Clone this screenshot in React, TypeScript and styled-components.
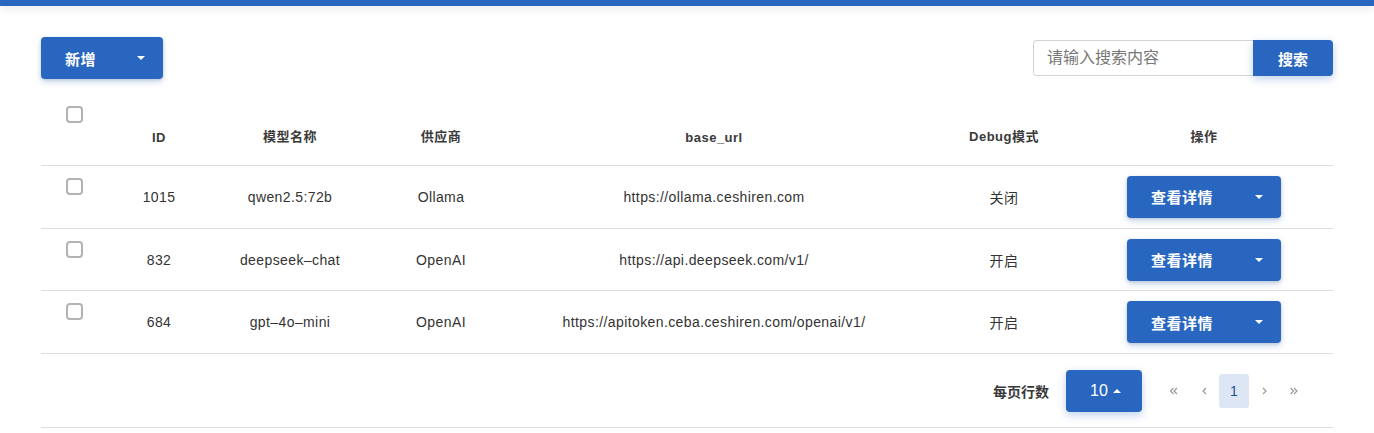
import React from "react";
import styled, { createGlobalStyle } from "styled-components";

const BLUE = "#2966c0";

const GlobalStyle = createGlobalStyle`
  html, body { margin: 0; padding: 0; background: #fff; }
  body {
    font-family: "Liberation Sans", "Noto Sans CJK SC", Arial, sans-serif;
    color: #333;
    -webkit-font-smoothing: antialiased;
  }
  * { box-sizing: border-box; }
`;

const TopBar = styled.div`
  height: 6px;
  background: ${BLUE};
  box-shadow: 0 2px 10px rgba(0, 0, 0, 0.12);
`;

const Page = styled.div`
  padding: 31px 41px 0 41px;
`;

const Toolbar = styled.div`
  display: flex;
  align-items: center;
  justify-content: space-between;
  height: 42px;
`;

const SplitButton = styled.button<{ $w: number }>`
  display: flex;
  align-items: center;
  justify-content: space-between;
  width: ${(p) => p.$w}px;
  height: 42px;
  padding: 0 18px 0 24px;
  border: none;
  border-radius: 4px;
  background: ${BLUE};
  color: #fff;
  font-family: inherit;
  font-size: 15px;
  font-weight: 700;
  letter-spacing: 0.5px;
  box-shadow: 0 3px 6px rgba(41, 102, 192, 0.25), 0 1px 3px rgba(0, 0, 0, 0.12);
  cursor: pointer;
`;

const Caret = styled.span<{ $up?: boolean }>`
  width: 0;
  height: 0;
  border-left: 4px solid transparent;
  border-right: 4px solid transparent;
  ${(p) =>
    p.$up ? "border-bottom: 4px solid #fff;" : "border-top: 4px solid #fff;"}
`;

const SearchGroup = styled.div`
  display: flex;
  align-items: stretch;
  height: 36px;
`;

const SearchInput = styled.input`
  width: 220px;
  height: 36px;
  border: 1px solid #d4d4d4;
  border-right: none;
  border-radius: 4px 0 0 4px;
  padding: 0 13px;
  font-family: inherit;
  font-size: 16px;
  color: #333;
  outline: none;
  &::placeholder { color: #777; }
`;

const SearchButton = styled.button`
  width: 80px;
  border: none;
  border-radius: 0 4px 4px 0;
  background: ${BLUE};
  color: #fff;
  font-family: inherit;
  font-size: 15px;
  font-weight: 700;
  box-shadow: 0 3px 8px rgba(41, 102, 192, 0.3);
  cursor: pointer;
`;

const Table = styled.div`
  margin-top: 13px;
  font-size: 14px;
`;

const COLS = "67px 102px 160px 142px 404px 176px 224px 17px";

const HeaderRow = styled.div`
  display: grid;
  grid-template-columns: ${COLS};
  height: 74px;
  border-bottom: 1px solid #dedede;
  align-items: end;
`;

const HeadCell = styled.div`
  text-align: center;
  font-size: 13px;
  font-weight: 700;
  letter-spacing: 0.5px;
  color: #3a3a3a;
  padding-bottom: 20px;
`;

const CheckCell = styled.div<{ $top: number }>`
  align-self: start;
  padding: ${(p) => p.$top}px 0 0 25px;
`;

const Checkbox = styled.span`
  display: block;
  width: 17px;
  height: 17px;
  border: 2px solid #b3b3b3;
  border-radius: 4px;
`;

const Row = styled.div`
  display: grid;
  grid-template-columns: ${COLS};
  height: 62.7px;
  border-bottom: 1px solid #dedede;
  align-items: center;
`;

const Cell = styled.div`
  text-align: center;
  color: #333;
  letter-spacing: 0.4px;
`;

const ActionCell = styled.div`
  display: flex;
  justify-content: center;
`;

const Footer = styled.div`
  display: flex;
  align-items: center;
  justify-content: flex-end;
  height: 74px;
  border-bottom: 1px solid #dedede;
  padding-right: 24px;
  gap: 17px;
`;

const FooterLabel = styled.span`
  font-size: 14px;
  font-weight: 700;
  color: #3a3a3a;
`;

const RowsSelect = styled.button`
  display: flex;
  align-items: center;
  gap: 5px;
  width: 76px;
  height: 42px;
  padding: 0 0 0 24px;
  border: none;
  border-radius: 4px;
  background: ${BLUE};
  color: #fff;
  font-family: inherit;
  font-size: 16px;
  font-weight: 500;
  box-shadow: 0 3px 8px rgba(41, 102, 192, 0.3);
`;

const Pager = styled.div`
  display: flex;
  align-items: center;
`;

const PageItem = styled.div<{ $active?: boolean }>`
  width: 30px;
  height: 34px;
  display: flex;
  align-items: center;
  justify-content: center;
  border-radius: 3px;
  font-size: 14px;
  color: ${(p) => (p.$active ? "#214f94" : "#999")};
  background: ${(p) => (p.$active ? "#dde6f4" : "transparent")};
`;

const Chev = ({ dir, double }: { dir: "l" | "r"; double?: boolean }) => {
  const single = dir === "l" ? "M5 1 L2 4 L5 7" : "M2 1 L5 4 L2 7";
  const second = dir === "l" ? "M8 1 L5 4 L8 7" : "M5 1 L8 4 L5 7";
  return (
    <svg width={double ? 10 : 7} height="8" viewBox={double ? "0 0 10 8" : "0 0 7 8"} fill="none">
      <path d={double ? (dir === "l" ? "M4.5 1 L1.5 4 L4.5 7" : "M1.5 1 L4.5 4 L1.5 7") : single} stroke="#9a9a9a" strokeWidth="1.2" />
      {double && <path d={second} stroke="#9a9a9a" strokeWidth="1.2" />}
    </svg>
  );
};

const rows = [
  { id: "1015", name: "qwen2.5:72b", vendor: "Ollama", url: "https://ollama.ceshiren.com", debug: "关闭" },
  { id: "832", name: "deepseek–chat", vendor: "OpenAI", url: "https://api.deepseek.com/v1/", debug: "开启" },
  { id: "684", name: "gpt–4o–mini", vendor: "OpenAI", url: "https://apitoken.ceba.ceshiren.com/openai/v1/", debug: "开启" },
];

export default function App() {
  return (
    <>
      <GlobalStyle />
      <TopBar />
      <Page>
        <Toolbar>
          <SplitButton $w={122}>
            新增
            <Caret />
          </SplitButton>
          <SearchGroup>
            <SearchInput placeholder="请输入搜索内容" />
            <SearchButton>搜索</SearchButton>
          </SearchGroup>
        </Toolbar>
        <Table>
          <HeaderRow>
            <CheckCell $top={14}>
              <Checkbox />
            </CheckCell>
            <HeadCell>ID</HeadCell>
            <HeadCell>模型名称</HeadCell>
            <HeadCell>供应商</HeadCell>
            <HeadCell>base_url</HeadCell>
            <HeadCell>Debug模式</HeadCell>
            <HeadCell>操作</HeadCell>
            <div />
          </HeaderRow>
          {rows.map((r) => (
            <Row key={r.id}>
              <CheckCell $top={12}>
                <Checkbox />
              </CheckCell>
              <Cell>{r.id}</Cell>
              <Cell>{r.name}</Cell>
              <Cell>{r.vendor}</Cell>
              <Cell>{r.url}</Cell>
              <Cell>{r.debug}</Cell>
              <ActionCell>
                <SplitButton $w={154}>
                  查看详情
                  <Caret />
                </SplitButton>
              </ActionCell>
              <div />
            </Row>
          ))}
          <Footer>
            <FooterLabel>每页行数</FooterLabel>
            <RowsSelect>
              10
              <Caret $up />
            </RowsSelect>
            <Pager>
              <PageItem><Chev dir="l" double /></PageItem>
              <PageItem><Chev dir="l" /></PageItem>
              <PageItem $active>1</PageItem>
              <PageItem><Chev dir="r" /></PageItem>
              <PageItem><Chev dir="r" double /></PageItem>
            </Pager>
          </Footer>
        </Table>
      </Page>
    </>
  );
}
